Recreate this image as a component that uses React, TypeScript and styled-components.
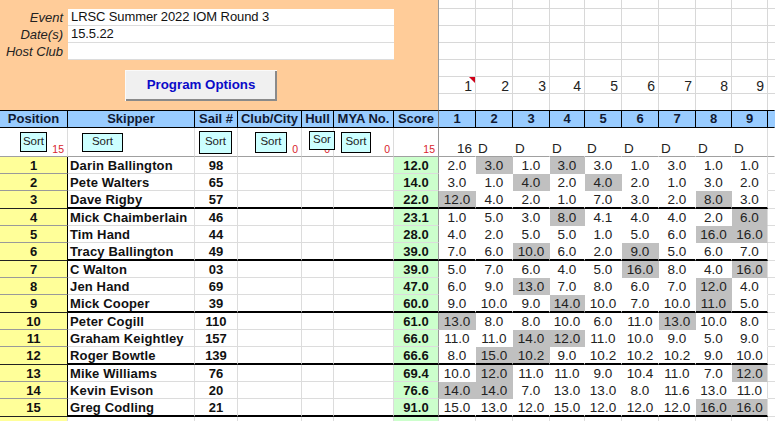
import React from "react";
import styled, { createGlobalStyle } from "styled-components";

const COLS = "68px 127px 43px 64px 32px 60px 45px 37px 37px 37px 35px 37px 37px 37px 36px 36px 7px";

const Global = createGlobalStyle`
  html, body { margin: 0; padding: 0; background: #fff; }
  body { font-family: "Liberation Sans", Arial, sans-serif; color: #111; }
`;

const Page = styled.div`
  width: 775px;
  height: 421px;
  overflow: hidden;
  background: #fff;
`;

const Top = styled.div`
  display: flex;
  height: 110px;
`;

const Peach = styled.div`
  width: 439px;
  flex: none;
  box-sizing: border-box;
  padding-top: 9px;
  background: #ffcc99;
  border-right: 1px solid #9a9a9a;
`;

const FormRow = styled.div`
  display: grid;
  grid-template-columns: 68px 326px;
  height: 17px;
  font-size: 13px;
  line-height: 17px;
`;

const FormLabel = styled.div`
  font-style: italic;
  text-align: right;
  padding-right: 5px;
  color: #222;
`;

const FormValue = styled.div`
  background: #fff;
  box-sizing: border-box;
  padding-left: 3px;
  border-bottom: 1px solid #dcdcdc;
  line-height: 16px;
  letter-spacing: -0.1px;
`;

const OptionsButton = styled.button`
  display: block;
  width: 152px;
  height: 31px;
  margin: 10px 0 0 125px;
  padding: 0 0 2px;
  border: none;
  background: #f0f0f0;
  box-shadow: inset 1px 1px 0 #fafafa, inset -2px -2px 0 #8a8a8a;
  color: #0a0ac8;
  font: bold 13.3px "Liberation Sans", Arial, sans-serif;
`;

const Sheet = styled.div`
  flex: 1;
  display: grid;
  grid-template-columns: 37px 37px 37px 35px 37px 37px 37px 36px 36px 7px;
  grid-template-rows: 9px 17px 17px 17px 17px 17px 16px;
`;

const SheetCell = styled.div`
  box-sizing: border-box;
  position: relative;
  border-right: 1px solid #d8d8d8;
  border-bottom: 1px solid #d8d8d8;
  text-align: right;
  font-size: 14px;
  line-height: 18px;
  padding-right: 3px;
  color: #222;
  &:nth-child(10n) { border-right: none; }
  &:nth-last-child(-n + 10) { border-bottom: none; }
`;

const CommentMark = styled.span`
  position: absolute;
  top: 0;
  right: 0;
  width: 0;
  height: 0;
  border-top: 6px solid #d00018;
  border-left: 6px solid transparent;
`;

const Row = styled.div<{ $h: number }>`
  display: grid;
  grid-template-columns: ${COLS};
  height: ${(p) => p.$h}px;
`;

const Head = styled.div<{ $line?: string }>`
  box-sizing: border-box;
  background: #99ccff;
  border-top: 1px solid #000;
  border-bottom: 1px solid #000;
  border-right: 1px solid ${(p) => p.$line || "#000"};
  font-size: 13px;
  font-weight: bold;
  line-height: 16px;
  text-align: center;
  color: #111a33;
  white-space: nowrap;
  overflow: hidden;
`;

const SortCell = styled.div<{ $line?: string }>`
  box-sizing: border-box;
  position: relative;
  border-bottom: 1px solid #a0a0a0;
  border-right: 1px solid ${(p) => p.$line || "#dcdcdc"};
`;

const SortBtn = styled.div<{ $x: number; $y: number; $w: number; $h: number }>`
  position: absolute;
  z-index: 2;
  left: ${(p) => p.$x}px;
  top: ${(p) => p.$y}px;
  width: ${(p) => p.$w}px;
  height: ${(p) => p.$h}px;
  box-sizing: border-box;
  border: 1px solid #000;
  background: #ccffff;
  font-size: 11.5px;
  text-align: center;
  line-height: ${(p) => p.$h - 4}px;
  overflow: hidden;
  color: #222;
`;

const Count = styled.span`
  position: absolute;
  right: 3px;
  bottom: 0;
  font-size: 10.5px;
  line-height: 14px;
  color: #d81e2c;
`;

const RaceHead = styled.div`
  position: absolute;
  right: 3px;
  bottom: 0;
  font-size: 13.5px;
  line-height: 15px;
  color: #222;
`;

const Discard = styled.div`
  position: absolute;
  left: 2px;
  bottom: 0;
  font-size: 13.5px;
  line-height: 15px;
  color: #222;
`;

const Cell = styled.div<{ $thick?: boolean }>`
  box-sizing: border-box;
  text-align: center;
  white-space: nowrap;
  overflow: hidden;
  font-size: 13px;
  line-height: 17px;
  border-bottom: ${(p) => (p.$thick ? "2px solid #000" : "1px solid #dcdcdc")};
`;

const PosCell = styled(Cell)`
  background: #ffff99;
  font-weight: bold;
  border-right: 1px solid #000;
  border-bottom: 1px solid ${(p) => (p.$thick ? "#222" : "#9a9a9a")};
`;

const NameCell = styled(Cell)`
  font-weight: bold;
  text-align: left;
  padding-left: 2px;
  letter-spacing: 0.15px;
  border-right: 1px solid #dcdcdc;
`;

const SailCell = styled(Cell)`
  font-weight: bold;
  border-right: 1px solid #dcdcdc;
`;

const EmptyCell = styled(Cell)`
  border-right: 1px solid #dcdcdc;
`;

const ScoreCell = styled(Cell)`
  background: #ccffcc;
  font-weight: bold;
  border-right: 1px solid #9a9a9a;
`;

const RaceCell = styled(Cell)<{ $drop?: boolean; $edge?: boolean }>`
  background: ${(p) => (p.$drop ? "#c0c0c0" : "#fff")};
  color: #222;
  font-size: 13.5px;
  border-bottom-color: ${(p) => (p.$thick ? "#000" : "transparent")};
  border-right: 1px solid ${(p) => (p.$edge ? "#dcdcdc" : "transparent")};
`;

const EdgeCell = styled(Cell)``;

const Tail = styled.div<{ $bg?: string; $open?: boolean }>`
  box-sizing: border-box;
  height: 4px;
  background: ${(p) => p.$bg || "#fff"};
  border-right: ${(p) => (p.$open ? "none" : "1px solid #dcdcdc")};
`;

type Sort = { label: string; x: number; y: number; w: number; h: number; count?: string };

const headers = ["Position", "Skipper", "Sail #", "Club/City", "Hull", "MYA No."];

const sorts: Sort[] = [
  { label: "Sort", x: 20, y: 4, w: 27, h: 20, count: "15" },
  { label: "Sort", x: 14, y: 5, w: 41, h: 19 },
  { label: "Sort", x: 4, y: 3, w: 33, h: 23 },
  { label: "Sort", x: 17, y: 4, w: 32, h: 21, count: "0" },
  { label: "Sor", x: 7, y: 3, w: 26, h: 19, count: "0" },
  { label: "Sort", x: 7, y: 4, w: 30, h: 21, count: "0" },
];

const results: [string, string, string, string[]][] = [
  ["Darin Ballington", "98", "12.0", ["2.0", "3.0*", "1.0", "3.0*", "3.0", "1.0", "3.0", "1.0", "1.0"]],
  ["Pete Walters", "65", "14.0", ["3.0", "1.0", "4.0*", "2.0", "4.0*", "2.0", "1.0", "3.0", "2.0"]],
  ["Dave Rigby", "57", "22.0", ["12.0*", "4.0", "2.0", "1.0", "7.0", "3.0", "2.0", "8.0*", "3.0"]],
  ["Mick Chaimberlain", "46", "23.1", ["1.0", "5.0", "3.0", "8.0*", "4.1", "4.0", "4.0", "2.0", "6.0*"]],
  ["Tim Hand", "44", "28.0", ["4.0", "2.0", "5.0", "5.0", "1.0", "5.0", "6.0", "16.0*", "16.0*"]],
  ["Tracy Ballington", "49", "39.0", ["7.0", "6.0", "10.0*", "6.0", "2.0", "9.0*", "5.0", "6.0", "7.0"]],
  ["C Walton", "03", "39.0", ["5.0", "7.0", "6.0", "4.0", "5.0", "16.0*", "8.0", "4.0", "16.0*"]],
  ["Jen Hand", "69", "47.0", ["6.0", "9.0", "13.0*", "7.0", "8.0", "6.0", "7.0", "12.0*", "4.0"]],
  ["Mick Cooper", "39", "60.0", ["9.0", "10.0", "9.0", "14.0*", "10.0", "7.0", "10.0", "11.0*", "5.0"]],
  ["Peter Cogill", "110", "61.0", ["13.0*", "8.0", "8.0", "10.0", "6.0", "11.0", "13.0*", "10.0", "8.0"]],
  ["Graham Keightley", "157", "66.0", ["11.0", "11.0", "14.0*", "12.0*", "11.0", "10.0", "9.0", "5.0", "9.0"]],
  ["Roger Bowtle", "139", "66.6", ["8.0", "15.0*", "10.2*", "9.0", "10.2", "10.2", "10.2", "9.0", "10.0"]],
  ["Mike Williams", "76", "69.4", ["10.0", "12.0*", "11.0", "11.0", "9.0", "10.4", "11.0", "7.0", "12.0*"]],
  ["Kevin Evison", "20", "76.6", ["14.0*", "14.0*", "7.0", "13.0", "13.0", "8.0", "11.6", "13.0", "11.0"]],
  ["Greg Codling", "21", "91.0", ["15.0", "13.0", "12.0", "15.0", "12.0", "12.0", "12.0", "16.0*", "16.0*"]],
];

const races = [1, 2, 3, 4, 5, 6, 7, 8, 9];

export default function App() {
  return (
    <Page>
      <Global />
      <Top>
        <Peach>
          <FormRow>
            <FormLabel>Event</FormLabel>
            <FormValue>LRSC Summer 2022 IOM Round 3</FormValue>
          </FormRow>
          <FormRow>
            <FormLabel>Date(s)</FormLabel>
            <FormValue>15.5.22</FormValue>
          </FormRow>
          <FormRow>
            <FormLabel>Host Club</FormLabel>
            <FormValue />
          </FormRow>
          <OptionsButton>Program Options</OptionsButton>
        </Peach>
        <Sheet>
          {Array.from({ length: 70 }, (_, i) => {
            const row = Math.floor(i / 10);
            const col = i % 10;
            return (
              <SheetCell key={i}>
                {row === 5 && col < 9 ? col + 1 : null}
                {row === 5 && col === 0 ? <CommentMark /> : null}
              </SheetCell>
            );
          })}
        </Sheet>
      </Top>

      <Row $h={18}>
        {headers.map((h) => (
          <Head key={h}>{h}</Head>
        ))}
        <Head $line="#777">Score</Head>
        {races.map((r) => (
          <Head key={r}>{r}</Head>
        ))}
        <Head $line="transparent" />
      </Row>

      <Row $h={29}>
        {sorts.map((s, i) => (
          <SortCell key={i}>
            <SortBtn $x={s.x} $y={s.y} $w={s.w} $h={s.h}>
              {s.label}
            </SortBtn>
            {s.count ? <Count>{s.count}</Count> : null}
          </SortCell>
        ))}
        <SortCell $line="#9a9a9a">
          <Count>15</Count>
        </SortCell>
        {races.map((r) => (
          <SortCell key={r} $line={r === 9 ? "#dcdcdc" : "transparent"}>
            {r === 1 ? <RaceHead>16</RaceHead> : <Discard>D</Discard>}
          </SortCell>
        ))}
        <SortCell $line="transparent" />
      </Row>

      {results.map(([name, sail, score, vals], i) => {
        const thick = i % 3 === 2;
        return (
          <Row key={name} $h={thick ? 18 : 17}>
            <PosCell $thick={thick}>{i + 1}</PosCell>
            <NameCell $thick={thick}>{name}</NameCell>
            <SailCell $thick={thick}>{sail}</SailCell>
            <EmptyCell $thick={thick} />
            <EmptyCell $thick={thick} />
            <EmptyCell $thick={thick} />
            <ScoreCell $thick={thick}>{score}</ScoreCell>
            {vals.map((v, j) => (
              <RaceCell key={j} $thick={thick} $edge={j === 8} $drop={v.endsWith("*")}>
                {v.replace("*", "")}
              </RaceCell>
            ))}
            <EdgeCell />
          </Row>
        );
      })}

      <Row $h={4}>
        <Tail $bg="#ffff99" />
        <Tail />
        <Tail />
        <Tail />
        <Tail />
        <Tail />
        <Tail $bg="#ccffcc" />
        {races.map((r) => (
          <Tail key={r} />
        ))}
        <Tail $open />
      </Row>
    </Page>
  );
}
